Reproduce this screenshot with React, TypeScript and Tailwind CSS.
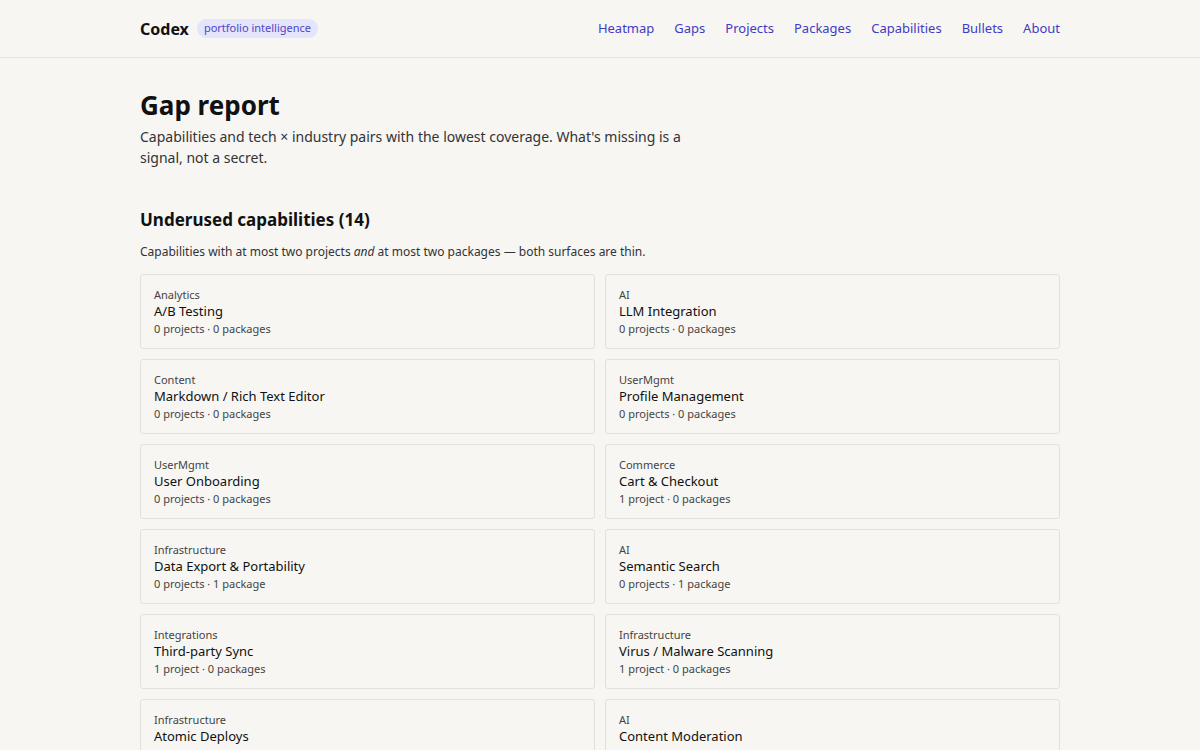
const nav = ['Heatmap', 'Gaps', 'Projects', 'Packages', 'Capabilities', 'Bullets', 'About'];

const caps: [string, string, string][] = [
  ['Analytics', 'A/B Testing', '0 projects · 0 packages'],
  ['AI', 'LLM Integration', '0 projects · 0 packages'],
  ['Content', 'Markdown / Rich Text Editor', '0 projects · 0 packages'],
  ['UserMgmt', 'Profile Management', '0 projects · 0 packages'],
  ['UserMgmt', 'User Onboarding', '0 projects · 0 packages'],
  ['Commerce', 'Cart & Checkout', '1 project · 0 packages'],
  ['Infrastructure', 'Data Export & Portability', '0 projects · 1 package'],
  ['AI', 'Semantic Search', '0 projects · 1 package'],
  ['Integrations', 'Third-party Sync', '1 project · 0 packages'],
  ['Infrastructure', 'Virus / Malware Scanning', '1 project · 0 packages'],
  ['Infrastructure', 'Atomic Deploys', '1 project · 1 package'],
  ['AI', 'Content Moderation', '1 project · 2 packages'],
];

export default function App() {
  return (
    <div className="min-h-screen bg-[#f7f6f3] text-[#111] font-['DejaVu_Sans']">
      <header className="border-b border-[#e5e3de]">
        <div className="mx-auto flex h-[57px] max-w-[920px] items-center justify-between">
          <div className="flex items-center gap-2">
            <span className="text-[16px] font-bold">Codex</span>
            <span className="rounded-full bg-[#e3e5fb] px-[7px] py-[1px] text-[11px] text-[#4f46c8]">
              portfolio intelligence
            </span>
          </div>
          <nav className="flex gap-5 text-[13px] text-[#3f3bc4]">
            {nav.map((n) => (
              <a key={n}>{n}</a>
            ))}
          </nav>
        </div>
      </header>

      <main className="mx-auto max-w-[920px] pt-[30px]">
        <h1 className="text-[26px] font-bold leading-[34px]">Gap report</h1>
        <p className="mt-[4px] max-w-[560px] text-[14px] leading-[21px] text-[#333]">
          Capabilities and tech × industry pairs with the lowest coverage. What's missing is a signal, not a secret.
        </p>

        <h2 className="mt-[40px] text-[17px] font-bold leading-[24px]">Underused capabilities (14)</h2>
        <p className="mt-[12px] text-[12px] leading-[16px] text-[#333]">
          Capabilities with at most two projects <em>and</em> at most two packages — both surfaces are thin.
        </p>

        <div className="mt-[14px] grid grid-cols-2 gap-[10px]">
          {caps.map(([cat, name, meta]) => (
            <div key={name} className="h-[75px] rounded-[3px] border border-[#e2e0db] px-[13px] pt-[13px]">
              <div className="text-[11px] leading-[14px] text-[#444]">{cat}</div>
              <div className="text-[13px] leading-[18px] text-[#111]">{name}</div>
              <div className="mt-[2px] text-[11px] leading-[14px] text-[#444]">{meta}</div>
            </div>
          ))}
        </div>
      </main>
    </div>
  );
}
